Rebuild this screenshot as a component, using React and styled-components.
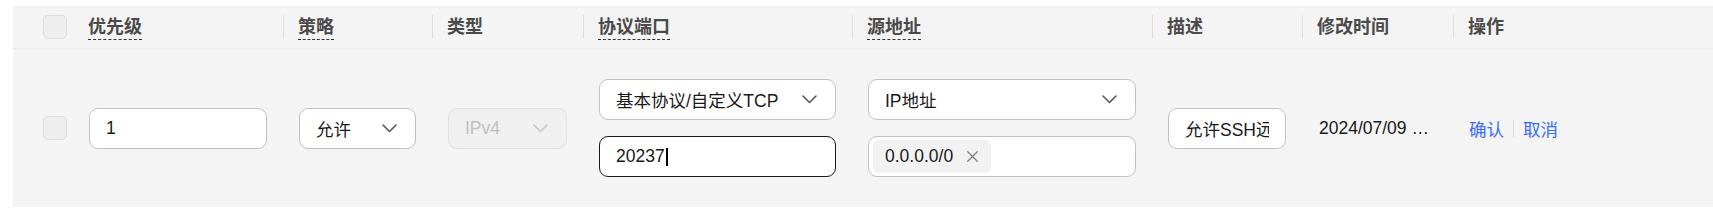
import React from "react";
import styled, { createGlobalStyle } from "styled-components";

const GlobalStyle = createGlobalStyle`
  body {
    margin: 0;
    background: #ffffff;
    font-family: "Liberation Sans", Arial, "Noto Sans CJK SC", sans-serif;
  }
`;

const columns = [
  { key: "check", width: "60px" },
  { key: "priority", width: "210px", title: "优先级", dashed: true },
  { key: "policy", width: "149px", title: "策略", dashed: true },
  { key: "type", width: "151px", title: "类型" },
  { key: "port", width: "269px", title: "协议端口", dashed: true },
  { key: "source", width: "300px", title: "源地址", dashed: true },
  { key: "desc", width: "150px", title: "描述" },
  { key: "time", width: "151px", title: "修改时间" },
  { key: "action", width: "1fr", title: "操作" },
];

const gridTemplate = columns.map((c) => c.width).join(" ");

const Panel = styled.div`
  margin: 6px 0 0 13px;
  background: #f4f4f4;
  font-family: "Liberation Sans", Arial, "Noto Sans CJK SC", sans-serif;
  font-size: 17.5px;
  color: #191919;
`;

const HeadRow = styled.div`
  display: grid;
  grid-template-columns: ${gridTemplate};
  height: 42px;
  align-items: center;
  border-bottom: 1px solid #ebebeb;
`;

const HeadCell = styled.div`
  position: relative;
  display: flex;
  align-items: center;
  height: 100%;
  padding-left: ${(p) => (p.first ? "30px" : "15px")};

  ${(p) =>
    p.sep &&
    `
    &::before {
      content: "";
      position: absolute;
      left: 0;
      top: 9px;
      width: 1px;
      height: 24px;
      background: #dedede;
    }
  `}
`;

const HeadTitle = styled.span`
  font-weight: 700;
  font-size: 18px;
  color: #4a4a4a;
  line-height: 20px;
  padding-bottom: 2px;
  margin-top: 3px;
  border-bottom: 1px dashed ${(p) => (p.dashed ? "#333" : "transparent")};
`;

const BodyRow = styled.div`
  display: grid;
  grid-template-columns: ${gridTemplate};
  height: 158px;
  align-items: center;
`;

const Cell = styled.div`
  display: flex;
  flex-direction: column;
  gap: 16px;
  padding: 0 ${(p) => (p.pad ? p.pad : "16px")};
  padding-left: ${(p) => (p.first ? "30px" : p.pad || "16px")};
  min-width: 0;
`;

const Checkbox = styled.div`
  width: 22px;
  height: 22px;
  border: 1px solid #dcdcdc;
  border-radius: 5px;
  background: #eeeeee;
`;

const Field = styled.div`
  box-sizing: border-box;
  display: flex;
  align-items: center;
  justify-content: space-between;
  height: ${(p) => p.h || "41px"};
  width: 100%;
  padding: 0 18px 0 16px;
  border: 1px solid ${(p) => (p.active ? "#191919" : p.disabled ? "#e0e0e0" : "#c2c2c2")};
  border-radius: 9px;
  background: ${(p) => (p.disabled ? "#f0f0f0" : "#ffffff")};
  color: ${(p) => (p.disabled ? "#c0c0c0" : "#191919")};
  white-space: nowrap;
  overflow: hidden;
`;

const TextInput = styled.input`
  box-sizing: border-box;
  width: 100%;
  height: 41px;
  padding: 0 16px;
  border: 1px solid #c2c2c2;
  border-radius: 9px;
  background: #ffffff;
  color: #191919;
  font-family: inherit;
  font-size: 17.5px;
  outline: none;
`;

const Caret = styled.span`
  display: inline-block;
  width: 2px;
  height: 18px;
  margin-left: 1px;
  background: #000;
  vertical-align: middle;
`;

const TagBox = styled.div`
  box-sizing: border-box;
  display: flex;
  align-items: center;
  height: 41px;
  width: 100%;
  padding: 0 4px;
  border: 1px solid #c2c2c2;
  border-radius: 9px;
  background: #ffffff;
`;

const Tag = styled.span`
  display: inline-flex;
  align-items: center;
  gap: 14px;
  height: 33px;
  padding: 0 13px 0 12px;
  border-radius: 6px;
  background: #f2f2f2;
  color: #191919;
`;

const Links = styled.div`
  display: flex;
  align-items: center;
  gap: 9px;
`;

const Link = styled.a`
  color: #386bff;
  cursor: pointer;
`;

const LinkSep = styled.span`
  width: 1px;
  height: 17px;
  background: #dcdcdc;
`;

const DateText = styled.span`
  white-space: nowrap;
`;

const Chevron = ({ color = "#575757" }) => (
  <svg width="15" height="9" viewBox="0 0 15 9" fill="none">
    <path d="M1 1 L7.5 7.5 L14 1" stroke={color} strokeWidth="1.6" strokeLinecap="round" strokeLinejoin="round" />
  </svg>
);

const CloseIcon = () => (
  <svg width="11" height="11" viewBox="0 0 11 11" fill="none">
    <path d="M0.75 0.75 L10.25 10.25 M10.25 0.75 L0.75 10.25" stroke="#808080" strokeWidth="1.3" strokeLinecap="round" />
  </svg>
);

const Select = ({ value, disabled }) => (
  <Field disabled={disabled}>
    <span>{value}</span>
    <Chevron color={disabled ? "#c6c6c6" : "#575757"} />
  </Field>
);

export default function App() {
  return (
    <>
      <GlobalStyle />
      <Panel>
        <HeadRow>
          {columns.map((c, i) => (
            <HeadCell key={c.key} first={i === 0} sep={i > 1}>
              {i === 0 ? <Checkbox /> : <HeadTitle dashed={c.dashed}>{c.title}</HeadTitle>}
            </HeadCell>
          ))}
        </HeadRow>
        <BodyRow>
          <Cell first>
            <Checkbox />
          </Cell>
          <Cell>
            <TextInput readOnly defaultValue="1" />
          </Cell>
          <Cell>
            <Select value="允许" />
          </Cell>
          <Cell>
            <Select value="IPv4" disabled />
          </Cell>
          <Cell>
            <Select value="基本协议/自定义TCP" />
            <Field active>
              <span>
                20237
                <Caret />
              </span>
            </Field>
          </Cell>
          <Cell>
            <Select value="IP地址" />
            <TagBox>
              <Tag>
                0.0.0.0/0
                <CloseIcon />
              </Tag>
            </TagBox>
          </Cell>
          <Cell>
            <TextInput readOnly defaultValue="允许SSH远程连接" />
          </Cell>
          <Cell pad="17px">
            <DateText>2024/07/09 …</DateText>
          </Cell>
          <Cell>
            <Links>
              <Link>确认</Link>
              <LinkSep />
              <Link>取消</Link>
            </Links>
          </Cell>
        </BodyRow>
      </Panel>
    </>
  );
}
